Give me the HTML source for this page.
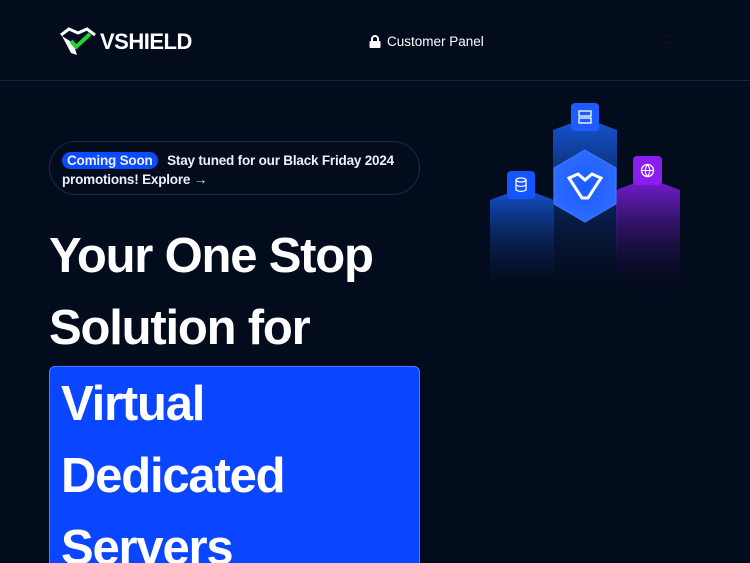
<!DOCTYPE html>
<html><head><meta charset="utf-8"><style>
*{margin:0;padding:0;box-sizing:border-box}
html,body{width:750px;height:563px;overflow:hidden}
body{background:#020c1d;font-family:"Liberation Sans",sans-serif;color:#fff;position:relative}
.nav{position:absolute;left:0;top:0;width:750px;height:81px;border-bottom:1px solid #1a2436}
.logo{position:absolute;left:59px;top:27px;display:flex;align-items:center}
.logo span{font-weight:bold;font-size:22px;letter-spacing:-0.5px;margin-left:3px}
.cp{position:absolute;left:369px;top:34px;font-size:13.5px;display:flex;align-items:center;gap:6px}
.burger{position:absolute;left:659px;top:35px;width:17px}
.burger div{height:2px;background:#0a0f18;margin-bottom:4px}
.pill{position:absolute;left:49px;top:141px;width:371px;height:54px;border:1px solid #1e2a3e;border-radius:27px;font-size:13.5px;line-height:19px;padding:9px 12px;font-weight:bold;color:#eef;letter-spacing:-0.2px}
.badge{background:#0a4bff;border-radius:10px;padding:1px 5px;margin-right:6px}
h1{position:absolute;left:49px;top:220px;font-size:49px;font-weight:bold;line-height:72px;letter-spacing:-1.2px}
.box{position:absolute;left:49px;top:366px;width:371px;height:210px;background:#0a46ff;border:1px solid #4a7bff;border-radius:6px;font-size:49px;font-weight:bold;line-height:72px;padding:1px 0 0 11px;letter-spacing:-1.2px}
</style></head><body>
<div class="nav">
 <div class="logo"><svg width="38" height="30" viewBox="0 0 38 30"><path d="M2 8 L10 2 L19 6 L28 2 L36 8" fill="none" stroke="#fff" stroke-width="3"/><path d="M3 9 L12 26 L18 28 L14 16 Z" fill="#fff"/><path d="M12 14 L17 20 L31 7" fill="none" stroke="#22d33a" stroke-width="4"/></svg><span>VSHIELD</span></div>
 <div class="cp"><svg width="12" height="13" viewBox="0 0 12 13"><path d="M3 6V4a3 3 0 0 1 6 0v2" fill="none" stroke="#fff" stroke-width="2"/><rect x="0.5" y="6" width="11" height="7" rx="1" fill="#fff"/></svg>Customer Panel</div>
 <div class="burger"><div></div><div></div><div></div></div>
</div>
<svg style="position:absolute;left:470px;top:90px" width="230" height="210" viewBox="0 0 230 210">
<defs>
<linearGradient id="b" x1="0" y1="0" x2="0" y2="1"><stop offset="0" stop-color="#1556d8"/><stop offset="1" stop-color="#0a1a40" stop-opacity="0"/></linearGradient>
<linearGradient id="p" x1="0" y1="0" x2="0" y2="1"><stop offset="0" stop-color="#7a1ed8"/><stop offset="1" stop-color="#1a0a40" stop-opacity="0"/></linearGradient>
<radialGradient id="h"><stop offset="0" stop-color="#1a5cff"/><stop offset="1" stop-color="#2d6bff"/></radialGradient>
</defs>
<path d="M20 110 L52 98 L84 110 V200 H20Z" fill="url(#b)"/>
<path d="M83 40 L115 28 L147 40 V200 H83Z" fill="url(#b)"/>
<path d="M146 100 L178 88 L210 100 V200 H146Z" fill="url(#p)"/>
<polygon points="115,60 146,78 146,114 115,132 84,114 84,78" fill="url(#h)" stroke="#3d7bff"/>
<path d="M99 88 L108 84 L115 90 L122 84 L131 88 L118 108 L112 108Z" fill="none" stroke="#fff" stroke-width="3"/>
<rect x="101" y="13" width="28" height="28" rx="4" fill="#1f5cff"/><rect x="109" y="21" width="12" height="5" fill="none" stroke="#fff" stroke-width="1.3"/><rect x="109" y="28" width="12" height="5" fill="none" stroke="#fff" stroke-width="1.3"/>
<rect x="37" y="81" width="28" height="28" rx="4" fill="#1555ff"/><ellipse cx="51" cy="90" rx="5" ry="2" fill="none" stroke="#fff" stroke-width="1.3"/><path d="M46 90 V100 Q51 103 56 100 V90 M46 95 Q51 98 56 95" fill="none" stroke="#fff" stroke-width="1.3"/>
<rect x="163" y="66" width="29" height="29" rx="4" fill="#8a1ef0"/><circle cx="177.5" cy="80.5" r="6" fill="none" stroke="#fff" stroke-width="1.3"/><path d="M171.5 80.5 H183.5 M177.5 74.5 Q173 80.5 177.5 86.5 Q182 80.5 177.5 74.5" fill="none" stroke="#fff" stroke-width="1.1"/>
</svg>
<div class="pill"><span class="badge">Coming Soon</span> Stay tuned for our Black Friday 2024 promotions! Explore →</div>
<h1>Your One Stop<br>Solution for</h1>
<div class="box">Virtual<br>Dedicated<br>Servers</div>
</body></html>
